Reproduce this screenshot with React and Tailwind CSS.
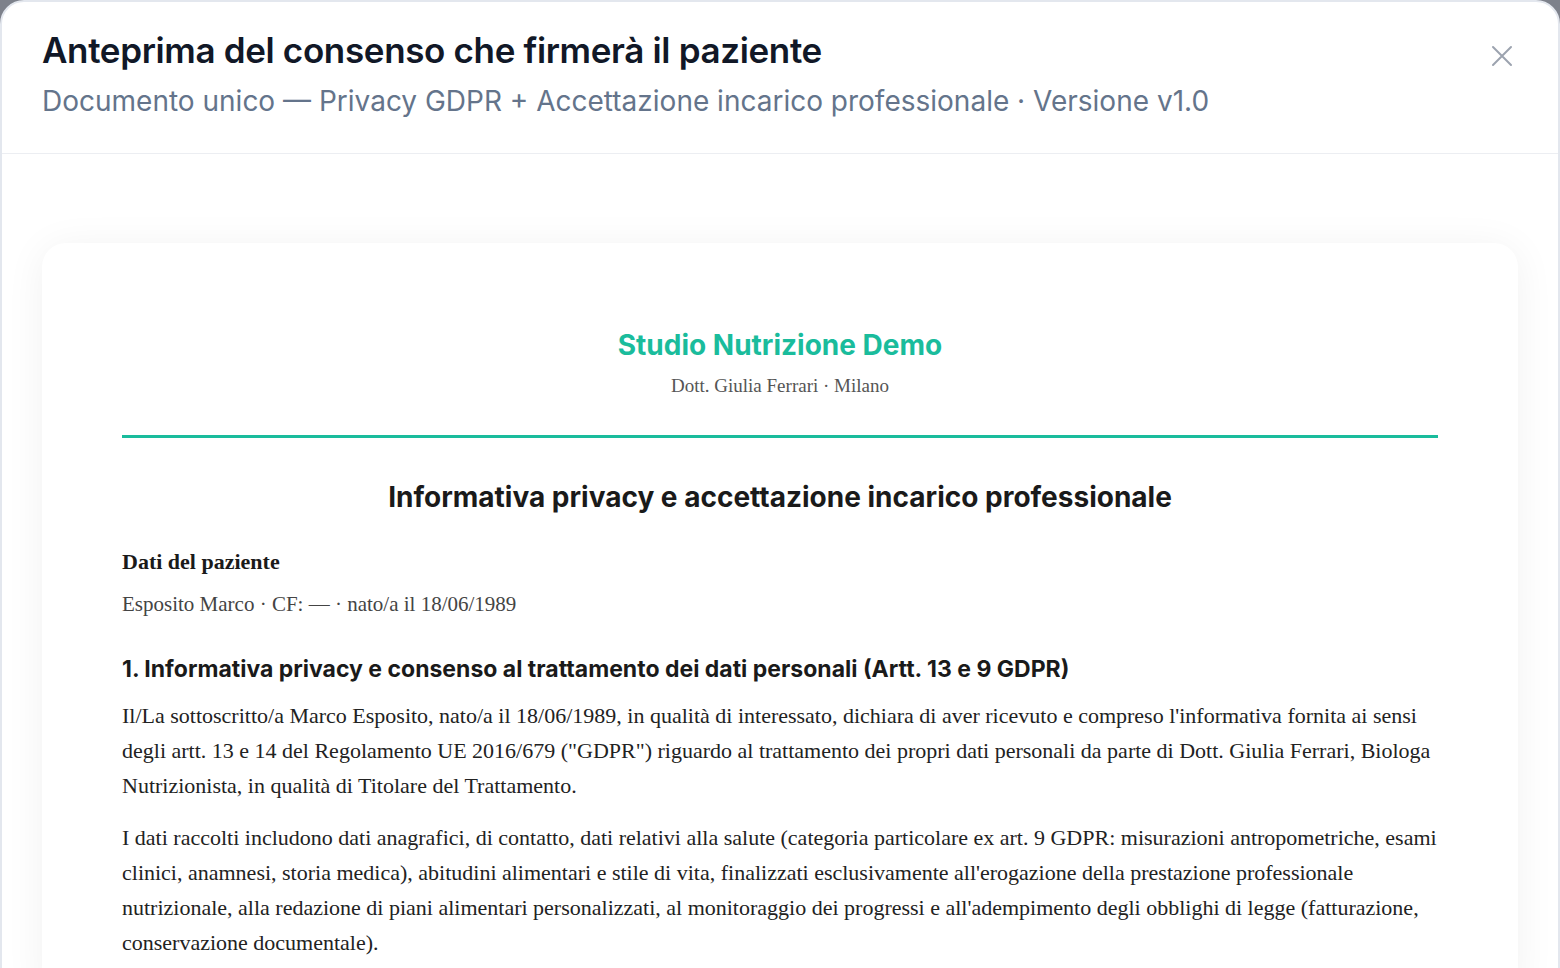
import React from "react";

export default function App() {
  return (
    <div className="w-full h-[968px] overflow-hidden bg-[#7d818b]">
      <div className="h-[1000px] w-full rounded-t-[24px] border-2 border-[#e3e7ee] bg-white">
        <div className="relative border-b border-[#eceef2] px-[40px] pt-[26px] pb-[34px]" style={{ fontFamily: "Inter, sans-serif" }}>
          <h1 className="text-[35px] leading-[44px] font-semibold tracking-[-0.01em] text-[#111827]">
            Anteprima del consenso che firmerà il paziente
          </h1>
          <p className="mt-[11px] text-[28px] leading-[36px] text-[#64748b]">
            Documento unico — Privacy GDPR + Accettazione incarico professionale · Versione v1.0
          </p>
          <button className="absolute right-[44px] top-[42px] text-[#9ca3af]">
            <svg width="24" height="24" viewBox="0 0 24 24" fill="none" stroke="currentColor" strokeWidth="2" strokeLinecap="round">
              <path d="M3 3 L21 21 M21 3 L3 21" />
            </svg>
          </button>
        </div>
        <div className="px-[40px] pt-[89px]">
          <div className="rounded-[24px] bg-white px-[80px] pt-[84px] pb-[40px] shadow-[0_4px_40px_rgba(0,0,0,0.06)]">
            <div className="text-center">
              <div className="text-[28px] leading-[36px] font-bold text-[#1abc9c]" style={{ fontFamily: "Inter, sans-serif" }}>
                Studio Nutrizione Demo
              </div>
              <div className="mt-[11px] text-[19px] leading-[24px] text-[#555]" style={{ fontFamily: '"Liberation Serif", serif' }}>
                Dott. Giulia Ferrari · Milano
              </div>
            </div>
            <div className="mt-[37px] h-[3px] bg-[#1abc9c]" />
            <h2 className="mt-[41px] text-center text-[28px] leading-[36px] font-bold text-[#1a1a1a]" style={{ fontFamily: "Inter, sans-serif" }}>
              Informativa privacy e accettazione incarico professionale
            </h2>
            <div style={{ fontFamily: '"Liberation Serif", serif' }}>
              <div className="mt-[32px] text-[22px] font-bold leading-[30px] text-[#1a1a1a]">Dati del paziente</div>
              <div className="mt-[12px] text-[21px] leading-[30px] text-[#444]">Esposito Marco · CF: — · nato/a il 18/06/1989</div>
            </div>
            <h3 className="mt-[35px] text-[23px] leading-[30px] font-bold text-[#1a1a1a]" style={{ fontFamily: "Inter, sans-serif" }}>
              1. Informativa privacy e consenso al trattamento dei dati personali (Artt. 13 e 9 GDPR)
            </h3>
            <div style={{ fontFamily: '"Liberation Serif", serif' }} className="mt-[14px] text-[22px] leading-[1.6] text-[#222]">
              <p>
                Il/La sottoscritto/a Marco Esposito, nato/a il 18/06/1989, in qualità di interessato, dichiara di aver ricevuto e compreso l'informativa fornita ai sensi degli artt. 13 e 14 del Regolamento UE 2016/679 ("GDPR") riguardo al trattamento dei propri dati personali da parte di Dott. Giulia Ferrari, Biologa Nutrizionista, in qualità di Titolare del Trattamento.
              </p>
              <p className="mt-[16px]">
                I dati raccolti includono dati anagrafici, di contatto, dati relativi alla salute (categoria particolare ex art. 9 GDPR: misurazioni antropometriche, esami clinici, anamnesi, storia medica), abitudini alimentari e stile di vita, finalizzati esclusivamente all'erogazione della prestazione professionale nutrizionale, alla redazione di piani alimentari personalizzati, al monitoraggio dei progressi e all'adempimento degli obblighi di legge (fatturazione, conservazione documentale).
              </p>
            </div>
          </div>
        </div>
      </div>
    </div>
  );
}
